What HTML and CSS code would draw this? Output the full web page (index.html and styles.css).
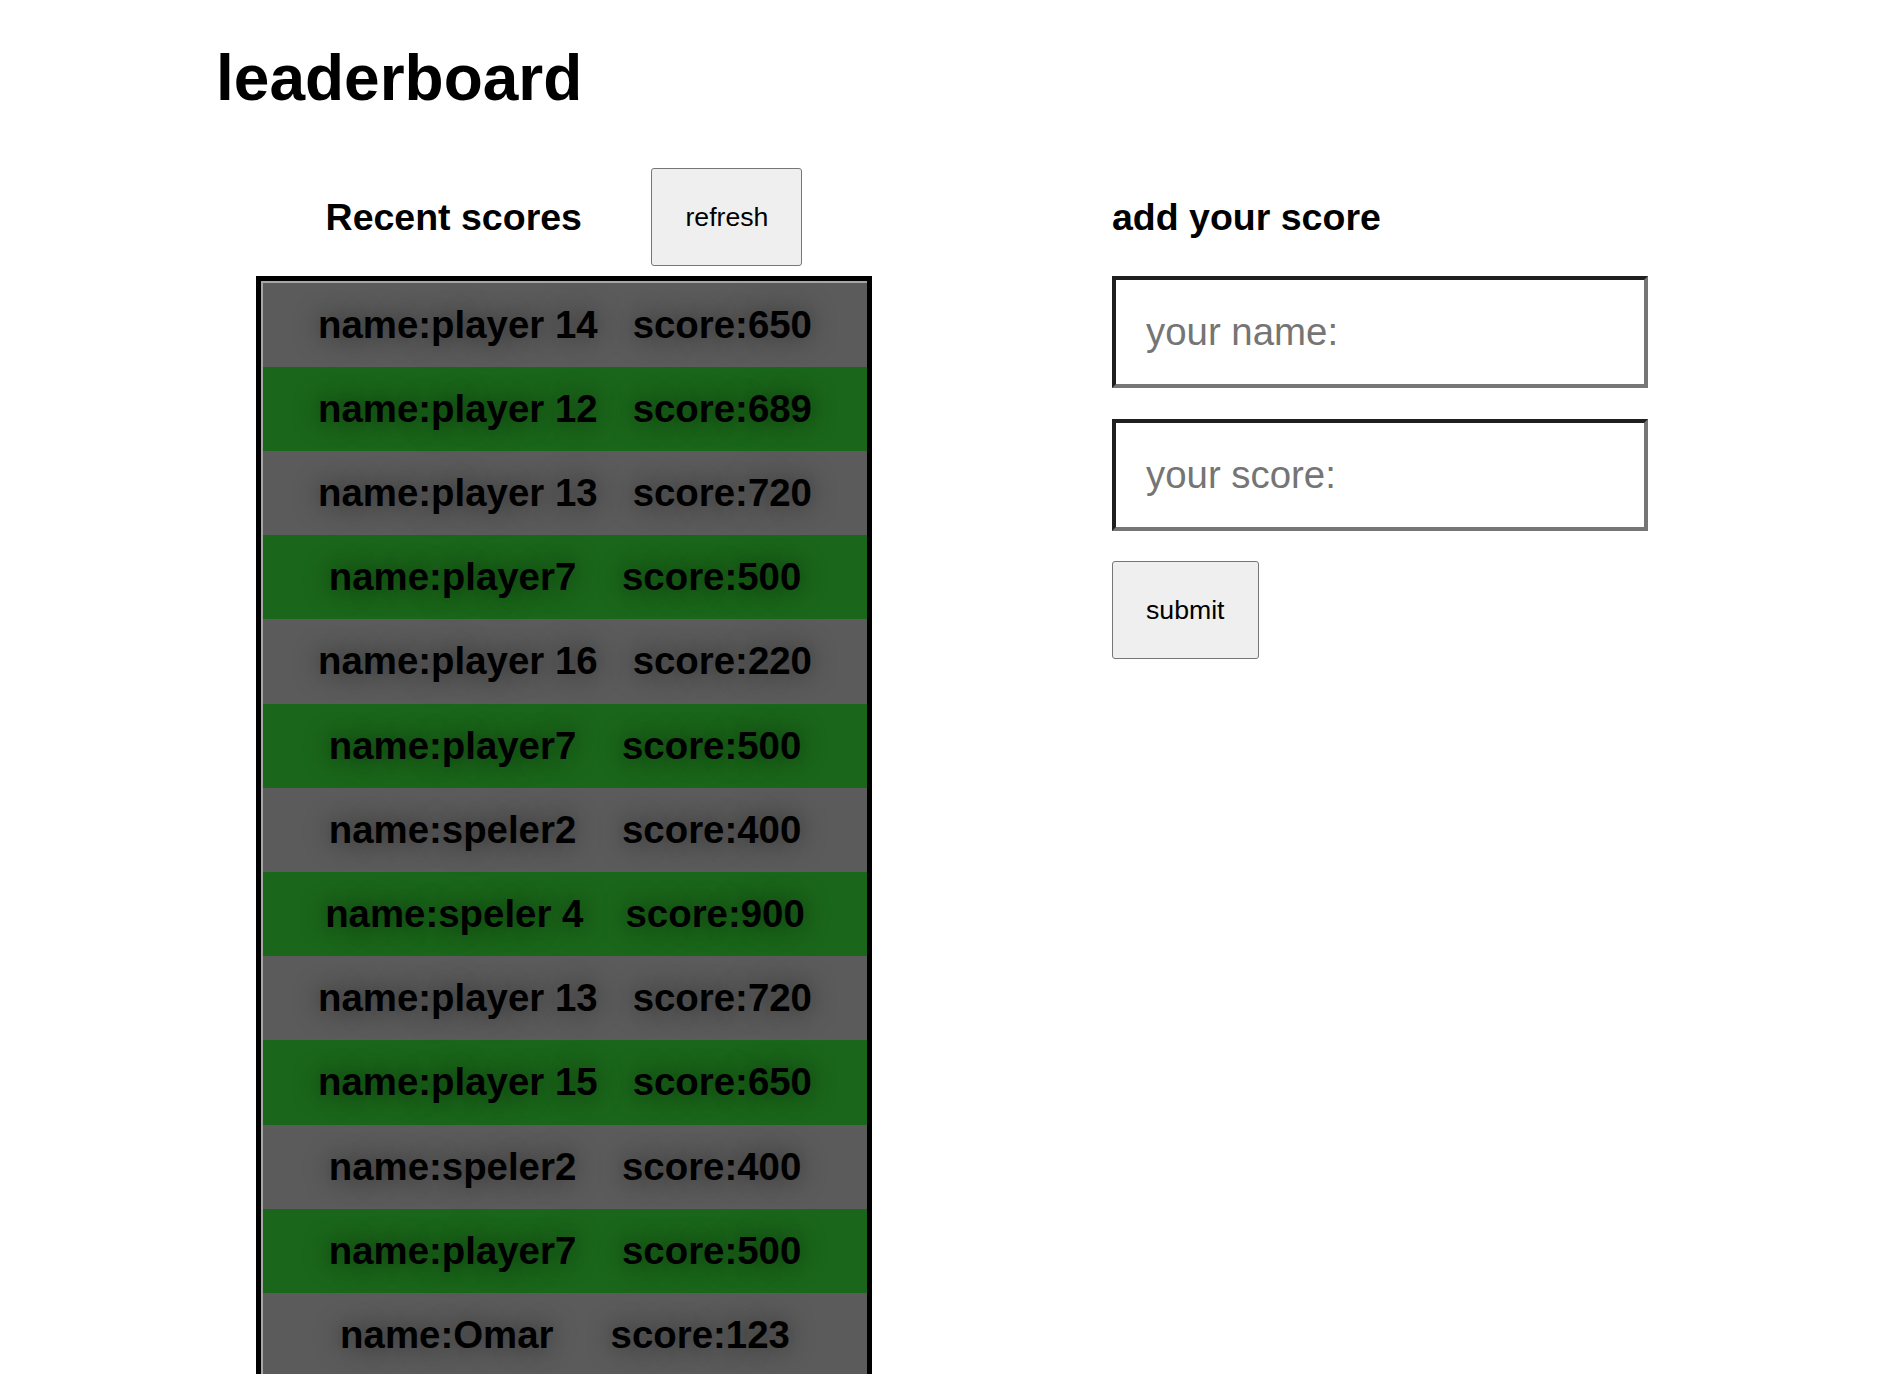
FILE: index.html
```html
<!DOCTYPE html>
<html lang="en">
<head>
<meta charset="utf-8">
<title>leaderboard</title>
<link rel="stylesheet" href="styles.css">
</head>
<body>
<div class="page">
  <h1 class="title">leaderboard</h1>
  <div class="columns">
    <section class="recent">
      <div class="recent-head">
        <h2 class="heading">Recent scores</h2>
        <button class="btn" type="button">refresh</button>
      </div>
      <div class="board">
        <div class="board-inner">
          <div class="row gray"><span>name:player 14</span><span>score:650</span></div>
          <div class="row green"><span>name:player 12</span><span>score:689</span></div>
          <div class="row gray"><span>name:player 13</span><span>score:720</span></div>
          <div class="row green"><span>name:player7</span><span>score:500</span></div>
          <div class="row gray"><span>name:player 16</span><span>score:220</span></div>
          <div class="row green"><span>name:player7</span><span>score:500</span></div>
          <div class="row gray"><span>name:speler2</span><span>score:400</span></div>
          <div class="row green"><span>name:speler 4</span><span>score:900</span></div>
          <div class="row gray"><span>name:player 13</span><span>score:720</span></div>
          <div class="row green"><span>name:player 15</span><span>score:650</span></div>
          <div class="row gray"><span>name:speler2</span><span>score:400</span></div>
          <div class="row green"><span>name:player7</span><span>score:500</span></div>
          <div class="row gray"><span>name:Omar</span><span>score:123</span></div>
        </div>
      </div>
    </section>
    <section class="add">
      <div class="add-head">
        <h2 class="heading">add your score</h2>
      </div>
      <input class="field field-name" type="text" placeholder="your name:">
      <input class="field field-score" type="text" placeholder="your score:">
      <button class="btn btn-submit" type="button">submit</button>
    </section>
  </div>
</div>
</body>
</html>
```
FILE: styles.css
```css
html, body {
  margin: 0;
  padding: 0;
  background: #ffffff;
}

body {
  font-family: "Liberation Sans", Arial, sans-serif;
  color: #000000;
}

.page {
  padding: 42px 0 0 216px;
}

.title {
  margin: 0;
  font-size: 64px;
  font-weight: bold;
  line-height: 73.6px;
}

.columns {
  display: flex;
  align-items: flex-start;
  gap: 240px;
  margin-top: 52px;
  margin-left: 40px;
}

.recent {
  width: 616px;
}

.recent-head {
  display: flex;
  justify-content: space-evenly;
  align-items: center;
  height: 98px;
}

.heading {
  margin: 0;
  font-size: 37.5px;
  font-weight: bold;
  line-height: 44px;
}

.btn {
  font-family: "Liberation Sans", Arial, sans-serif;
  font-size: 26.67px;
  line-height: 30px;
  color: #000000;
  background: #efefef;
  border: 1px solid #767676;
  border-radius: 3px;
  padding: 33px;
  margin: 0;
}

.board {
  margin-top: 10px;
  border: 5px solid #000000;
}

.board-inner {
  border-style: solid;
  border-width: 2px 0 0 2px;
  border-color: #a6a6a6;
}

.row {
  display: flex;
  justify-content: space-evenly;
  align-items: center;
  padding: 20px 20px;
  line-height: 44.2px;
  font-size: 38.4px;
  font-weight: bold;
  color: #000000;
  text-shadow: 0 0 24px rgba(0, 0, 0, 0.55);
  white-space: pre;
}

.gray {
  background: #5b5b5b;
}

.green {
  background: #1a661a;
}

.add {
  width: 536px;
  display: flex;
  flex-direction: column;
  align-items: flex-start;
}

.add-head {
  display: flex;
  align-items: center;
  height: 98px;
}

.field {
  box-sizing: border-box;
  width: 536px;
  height: 112px;
  margin: 10px 0 0 0;
  padding: 0 20px 0 30px;
  font-family: "Liberation Sans", Arial, sans-serif;
  font-size: 38.4px;
  color: #000000;
  background: #ffffff;
  border-style: solid;
  border-width: 4px;
  border-color: #1f1f1f #767676 #767676 #1f1f1f;
  outline: none;
}

.field::placeholder {
  color: #757575;
}

.field-score {
  margin-top: 31px;
}

.btn-submit {
  margin-top: 30px;
}
```
